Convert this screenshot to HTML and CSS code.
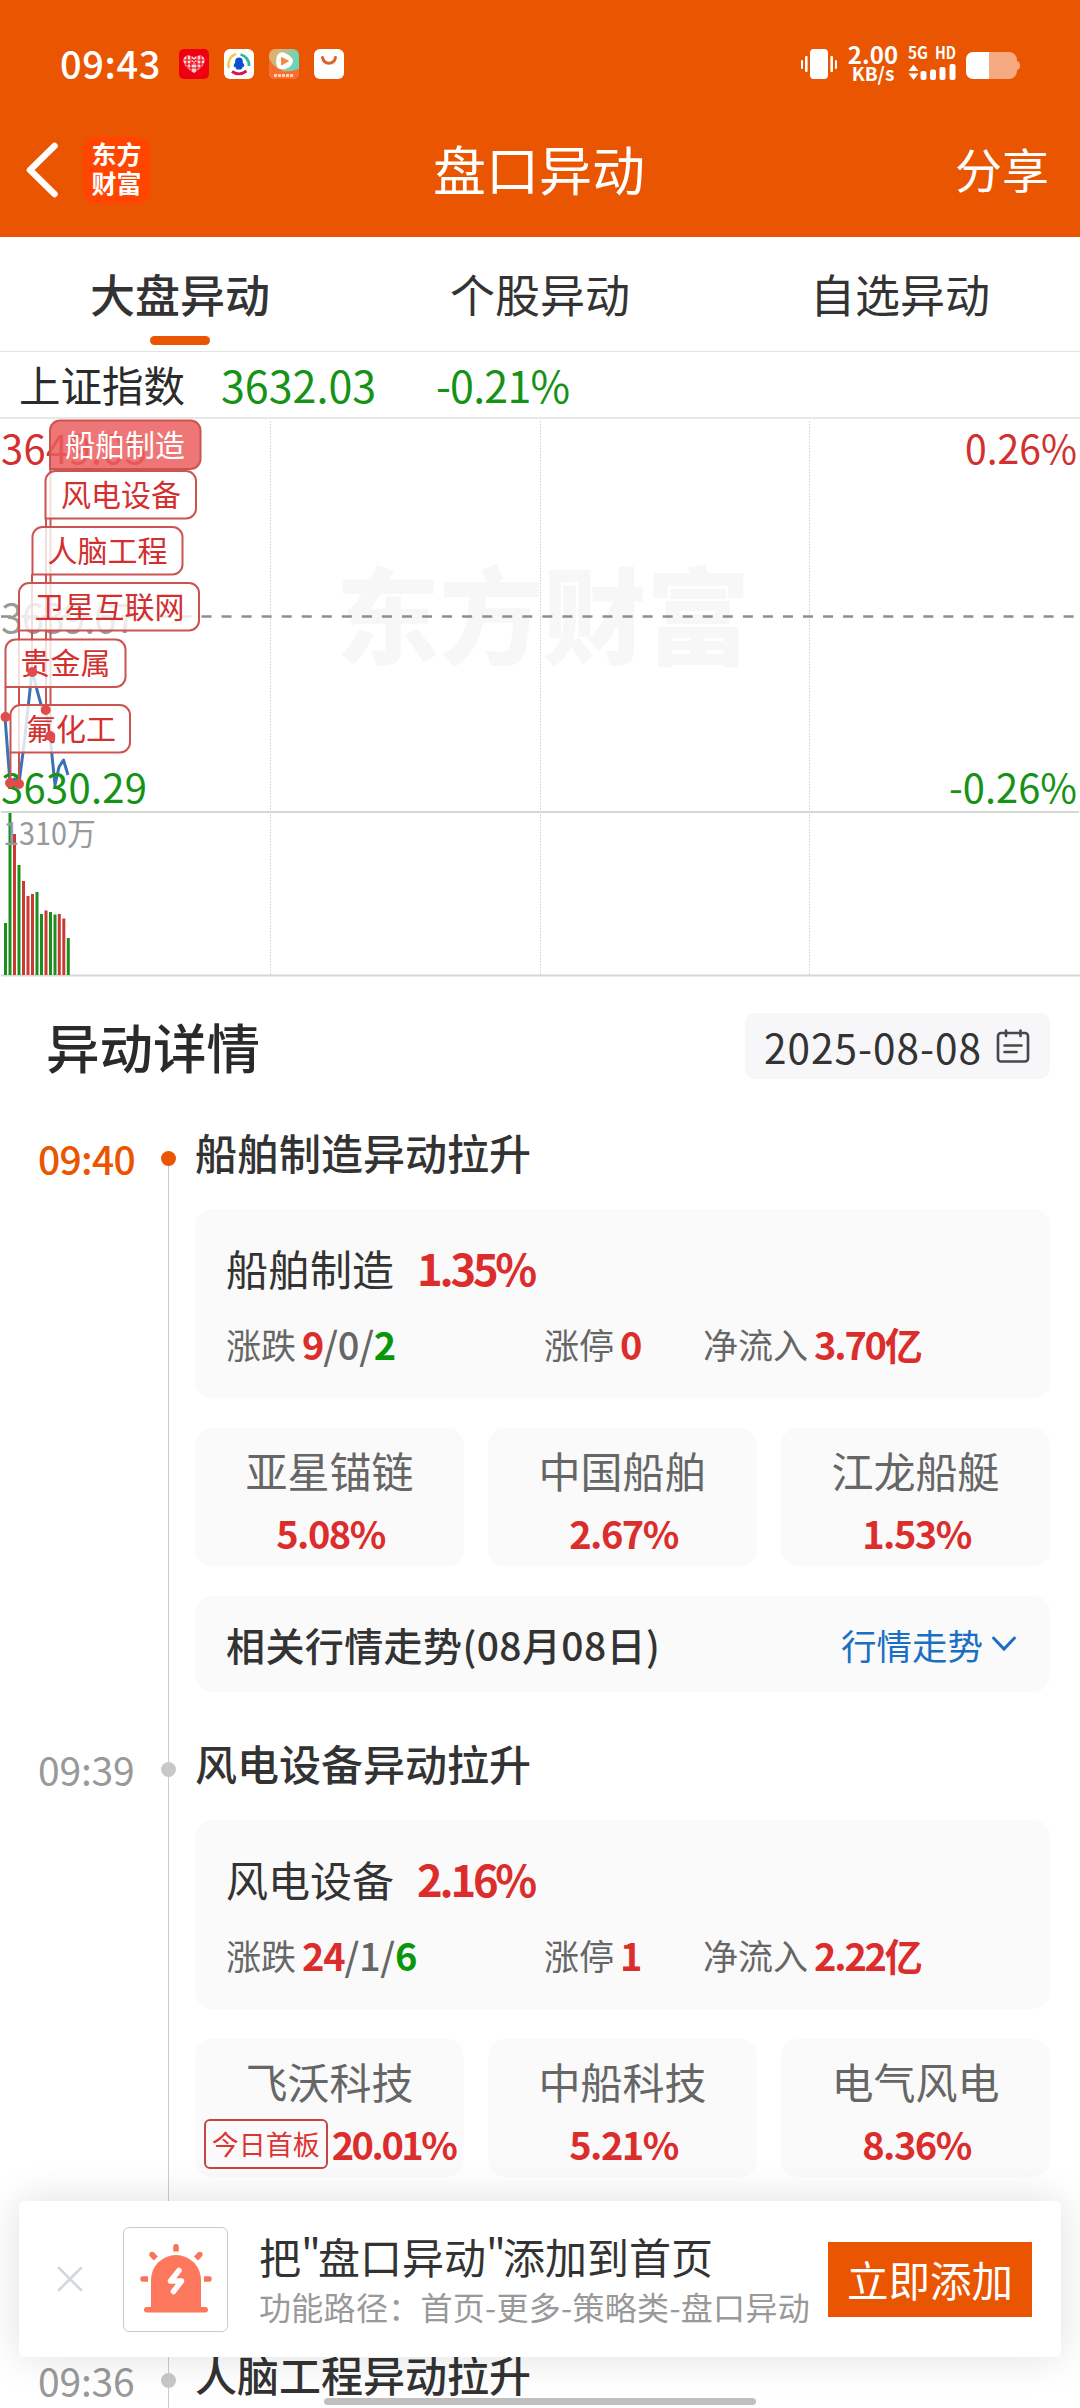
FILE: index.html
```html
<!DOCTYPE html>
<html lang="zh-CN">
<head>
<meta charset="utf-8">
<title>盘口异动</title>
<link rel="stylesheet" href="styles.css">
</head>
<body>
<div class="screen">
  <header class="header">
    <div class="status">
      <span class="clock">09:43</span>
      <svg class="apps" width="165" height="30" viewBox="0 0 165 30">
        <defs>
          <linearGradient id="g1" x1="0" y1="0" x2="1" y2="0.3"><stop offset="0" stop-color="#f0a860"/><stop offset=".55" stop-color="#b5c08e"/><stop offset="1" stop-color="#5fd8bf"/></linearGradient>
        </defs>
        <rect width="30" height="30" rx="5" fill="#ee0010"/>
        <path d="M15 24C9 20 4.500 16.500 4.500 11.500C4.500 6 11.500 5 15 9C18.500 5 25.500 6 25.500 11.500C25.500 16.500 21 20 15 24Z" fill="#fbd7d7"/>
        <path d="M8 7v12M12 6v16M18 6v16M22 7v12M5 11h6M19 11h6M5 15h20M9 19h12M13 10l4 4M17 10l-4 4" stroke="#ee0010" stroke-width="1.200" fill="none"/>
        <rect x="45" width="30" height="30" rx="6" fill="#fff"/>
        <path d="M50 19A11 11 0 0 1 57 5" stroke="#e9cf4e" stroke-width="2.500" fill="none"/>
        <path d="M61.500 5.500A11 11 0 0 1 70 17" stroke="#2eb6a0" stroke-width="2.800" fill="none"/>
        <path d="M53 22.500Q60 27.500 67.500 22" stroke="#d3145c" stroke-width="2.800" fill="none"/>
        <path d="M60 8.500c-3.500 0-4 3-3.800 5c-1.600 2-2 4-1 4.500l1-.6c.3 1.500 1 2.600 1.800 3h4c.8-.4 1.500-1.500 1.800-3l1 .6c1-.5.6-2.500-1-4.500c.2-2-.3-5-3.800-5z" fill="#0b50d0"/>
        <rect x="90" width="30" height="30" rx="6" fill="url(#g1)"/>
        <path d="M90 20Q105 25 120 20V24a6 6 0 0 1-6 6H96a6 6 0 0 1-6-6Z" fill="#ff6a30"/>
        <path d="M90 9Q94 19 105 22Q97 23 90 20Z" fill="#f36f2d"/>
        <path d="M98.500 6Q101 2 106 4Q113 7 114 12Q113 18 106 20Q99 21 98 17Q96 11 98.500 6Z" fill="#fff"/>
        <path d="M102.500 8.500L109.500 12L102.500 16Z" fill="#ef8c3c" stroke="#ef8c3c" stroke-linejoin="round"/>
        <path d="M95 26.500h20" stroke="#ffd9a8" stroke-width="3" stroke-dasharray="3 1"/>
        <rect x="135" width="30" height="30" rx="6" fill="#fff"/>
        <path d="M143.500 8.500c1.500 7.500 11.500 7.500 13 0" stroke="#d9622a" stroke-width="3" stroke-linecap="round" fill="none"/>
      </svg>
      <span class="grow"></span>
      <svg width="38" height="30" viewBox="0 0 38 30" fill="#fff">
        <rect x="10" width="18" height="30" rx="4"/>
        <rect x="1" y="11" width="2" height="9" rx="1"/><rect x="5" y="7" width="2.600" height="16" rx="1"/>
        <rect x="30.400" y="7" width="2.600" height="16" rx="1"/><rect x="35" y="11" width="2" height="9" rx="1"/>
      </svg>
      <span class="speed"><b class="rate">2.00</b><b class="unit">KB/s</b></span>
      <svg class="signal" width="48" height="36" viewBox="0 0 48 36" fill="#fff">
        <text x="0" y="13" class="net" textLength="20" lengthAdjust="spacingAndGlyphs">5G</text>
        <text x="27" y="13" class="net" textLength="21" lengthAdjust="spacingAndGlyphs">HD</text>
        <path d="M5.500 18.500L10.500 25H.5ZM5.500 34L.5 27.500H10.500Z"/>
        <rect x="12.500" y="25" width="6" height="9" rx="2"/><rect x="22" y="23.500" width="6" height="10.500" rx="2"/>
        <rect x="31.500" y="21" width="6" height="13" rx="2"/><rect x="41.500" y="18" width="6" height="16" rx="2"/>
      </svg>
      <svg class="battery" width="54" height="27" viewBox="0 0 54 27" fill="#fff">
        <path opacity=".5" d="M23 0h20a8 8 0 0 1 8 8v1q3 .5 3 4.500t-3 4.500v1a8 8 0 0 1-8 8H23Z"/>
        <path d="M23 0H7a7 7 0 0 0-7 7v13a7 7 0 0 0 7 7h16Z"/>
      </svg>
    </div>
    <nav class="navbar">
      <div class="nav-left">
        <svg width="32" height="56" viewBox="0 0 32 56"><path d="M28.500 4L4 28L28.500 52" fill="none" stroke="#fff" stroke-width="6.500" stroke-linecap="round" stroke-linejoin="round"/></svg>
        <span class="logo">东方<br>财富</span>
      </div>
      <h1 class="title">盘口异动</h1>
      <span class="share">分享</span>
    </nav>
  </header>

  <div class="tabs">
    <div class="tab active">大盘异动</div>
    <div class="tab">个股异动</div>
    <div class="tab">自选异动</div>
  </div>

  <div class="index-row"><span class="index-name">上证指数</span><span class="index-val">3632.03</span><span class="index-chg">-0.21%</span></div>

  <svg class="chart" width="1080" height="559" viewBox="0 419 1080 559">
    <text class="mark" x="336" y="656" textLength="414" lengthAdjust="spacingAndGlyphs">东方财富</text>
    <g stroke="#cfcfcf" stroke-width="1" stroke-dasharray="1.500 1.500"><path d="M270.500 421V975M540.500 421V975M809.500 421V975"/></g>
    <path d="M1 812H1079M1 975.500H1080" stroke="#d6d6d6" stroke-width="2"/>
    <path d="M1 616.500H1074" stroke="#8e8e8e" stroke-width="2.600" stroke-dasharray="10 10.050"/>
    <g class="axis">
      <text x="1" y="463.500" fill="#d33030" textLength="146">3649.05</text>
      <text x="1" y="632.500" fill="#999" textLength="136">3639.67</text>
      <text x="965" y="463.500" fill="#d33030" textLength="112" lengthAdjust="spacingAndGlyphs">0.26%</text>
      <text x="949" y="802.500" fill="#169316" textLength="128" lengthAdjust="spacingAndGlyphs">-0.26%</text>
    </g>
    <polyline points="5,717 10,783 14,779 19,783 24,745 30,690 32,670 37,690 42,708 46,712 50,736 55,785 59,767 63.500,760 68,775" fill="none" stroke="#3c72b4" stroke-width="3" stroke-linejoin="round"/>
    <text class="axis" x="1" y="802.500" fill="#169316" textLength="146">3630.29</text>
    <g stroke="#1b8f1b" stroke-width="3">
      <path d="M5.500 923V975M10 813V975M19 865V975M37 892V975M41.500 914V975M50.500 912V975M55 914.500V975M68.300 938V975"/>
      <path stroke="#c93a34" d="M14.500 834V975M23.500 881V975M28 896V975M32.500 894V975M46 910.500V975M59.300 914V975M63.800 918.500V975"/>
    </g>
    <text class="vol" x="3" y="845" fill="#999" textLength="93" lengthAdjust="spacingAndGlyphs">1310万</text>
    <path d="M5.500 687V717M10.500 752V782M19 630V784M32 574V672M46 518V710M50.500 469V736" stroke="#cc5450" stroke-width="2"/>
    <g fill="#fff" fill-opacity=".8" stroke="#cc5450" stroke-width="2">
      <path d="M10.500 752.500V715a10 10 0 0 1 10-10H120a10 10 0 0 1 10 10V742.500a10 10 0 0 1-10 10Z"/>
      <path d="M5.500 687V649.500a10 10 0 0 1 10-10H115.500a10 10 0 0 1 10 10V677a10 10 0 0 1-10 10Z"/>
      <path d="M19 630.500V593a10 10 0 0 1 10-10H189a10 10 0 0 1 10 10V620.500a10 10 0 0 1-10 10Z"/>
      <path d="M32.500 574.500V537a10 10 0 0 1 10-10H172.500a10 10 0 0 1 10 10V564.500a10 10 0 0 1-10 10Z"/>
      <path d="M45.500 518.500V481a10 10 0 0 1 10-10H186a10 10 0 0 1 10 10V508.500a10 10 0 0 1-10 10Z"/>
      <path fill="#eb5e5e" fill-opacity=".85" d="M50 469V430.500a10 10 0 0 1 10-10H190.500a10 10 0 0 1 10 10V459a10 10 0 0 1-10 10Z"/>
    </g>
    <g class="tag">
      <text x="65" y="455.500" fill="#fff">船舶制造</text>
      <text x="61" y="505.500">风电设备</text>
      <text x="47.500" y="561.500">人脑工程</text>
      <text x="34.500" y="617.500">卫星互联网</text>
      <text x="20.500" y="674">贵金属</text>
      <text x="26" y="739.500">氟化工</text>
    </g>
    <g fill="#e14b4b"><circle cx="5.500" cy="717" r="5"/><circle cx="10" cy="783" r="5"/><circle cx="19" cy="784" r="5"/><circle cx="32.300" cy="672" r="5"/><circle cx="45.700" cy="710" r="5"/><circle cx="50.300" cy="736" r="5"/></g>
  </svg>

  <section class="detail">
    <div class="detail-head">
      <h2>异动详情</h2>
      <div class="date"><span>2025-08-08</span>
        <svg width="34" height="34" viewBox="0 0 34 34" fill="none" stroke="#484848" stroke-width="2.600" stroke-linecap="round"><rect x="2" y="4" width="30" height="28.500" rx="3"/><path d="M10 1.500V7M24.500 1.500V7M8.500 16.500H25.500M8.500 23H20.500"/></svg>
      </div>
    </div>

    <article class="entry first">
      <time>09:40</time>
      <div class="rail"><i></i></div>
      <div class="body">
        <h3>船舶制造异动拉升</h3>
        <div class="card board">
          <div class="board-top"><span>船舶制造</span><b>1.35%</b></div>
          <div class="stats"><span class="s1">涨跌<b><em>9</em>/0/<em class="down">2</em></b></span><span class="s2">涨停<b><em>0</em></b></span><span class="s3">净流入<b><em>3.70亿</em></b></span></div>
        </div>
        <div class="stocks">
          <div class="card stock"><span>亚星锚链</span><b>5.08%</b></div>
          <div class="card stock"><span>中国船舶</span><b>2.67%</b></div>
          <div class="card stock"><span>江龙船艇</span><b>1.53%</b></div>
        </div>
        <div class="card trend"><b>相关行情走势(08月08日)</b><span class="link">行情走势</span>
          <svg width="26" height="18" viewBox="0 0 26 18"><path d="M2.500 3L13 14L23.500 3" fill="none" stroke="#1a6fc4" stroke-width="3" stroke-linecap="round"/></svg>
        </div>
      </div>
    </article>

    <article class="entry">
      <time>09:39</time>
      <div class="rail"><i></i></div>
      <div class="body">
        <h3>风电设备异动拉升</h3>
        <div class="card board">
          <div class="board-top"><span>风电设备</span><b>2.16%</b></div>
          <div class="stats"><span class="s1">涨跌<b><em>24</em>/1/<em class="down">6</em></b></span><span class="s2">涨停<b><em>1</em></b></span><span class="s3">净流入<b><em>2.22亿</em></b></span></div>
        </div>
        <div class="stocks">
          <div class="card stock"><span>飞沃科技</span><div class="pct"><i class="badge">今日首板</i><b>20.01%</b></div></div>
          <div class="card stock"><span>中船科技</span><b>5.21%</b></div>
          <div class="card stock"><span>电气风电</span><b>8.36%</b></div>
        </div>
      </div>
    </article>

    <article class="entry">
      <time>09:36</time>
      <div class="rail"><i></i></div>
      <div class="body"><h3>人脑工程异动拉升</h3></div>
    </article>
  </section>

  <aside class="toast">
    <svg class="close" width="28" height="28" viewBox="0 0 28 28"><path d="M3 3L25 25M25 3L3 25" stroke="#d3d7dc" stroke-width="2.600" stroke-linecap="round"/></svg>
    <div class="alarm">
      <svg width="74" height="72" viewBox="0 0 74 72">
        <g fill="#fc775b"><path d="M12 66V37a25 25 0 0 1 50 0V66Z"/><rect x="5" y="64" width="64" height="5.500" rx="2.700"/></g>
        <g stroke="#f5755c" stroke-width="5.500" fill="none"><path d="M37 8.500V4.500M9 36H4.500M65 36H69.500M16.800 15.500L13.500 12M57 15.500L60.300 12"/></g>
        <g fill="#f5755c"><circle cx="37" cy="3.700" r="2.750"/><circle cx="4" cy="36" r="2.750"/><circle cx="70" cy="36" r="2.750"/><circle cx="13" cy="11.500" r="2.750"/><circle cx="60.800" cy="11.500" r="2.750"/></g>
        <path d="M40 27.500L31.500 38H42.500L34.500 48.500" fill="none" stroke="#fff" stroke-width="5.500" stroke-linecap="round" stroke-linejoin="round"/>
      </svg>
    </div>
    <div class="toast-text"><strong>把<q>"</q>盘口异动<q>"</q>添加到首页</strong><small>功能路径：首页-更多-策略类-盘口异动</small></div>
    <button class="add">立即添加</button>
  </aside>
  <div class="home-bar"></div>
</div>
</body>
</html>
```
FILE: styles.css
```css
* { box-sizing: border-box; margin: 0; padding: 0; }
body { background: #fff; font-family: "Noto Sans CJK SC", "Noto Sans", sans-serif; color: #333; }
em, i { font-style: normal; }
b, h2, h3 { font-weight: 500; }
q { quotes: none; letter-spacing: -3px; }
.screen { position: relative; width: 1080px; height: 2408px; overflow: hidden; }

.header { height: 237px; background: #ea5502; color: #fff; }
.status { height: 128px; padding: 0 60px 0 60px; display: flex; align-items: center; }
.clock { width: 119px; padding-bottom: 3px; font-size: 38px; font-weight: 500; line-height: 40px; letter-spacing: 0.6px; }
.grow { flex: 1; }
.speed { width: 70px; display: flex; flex-direction: column; align-items: center; padding-bottom: 3px; }
.speed b { font-weight: 700; }
.rate { font-size: 24px; line-height: 20px; }
.unit { font-size: 19px; line-height: 18px; }
.net { font-size: 17px; font-weight: 700; }
.signal { margin-right: 10px; }
.battery { margin-top: 3px; }
.navbar { height: 84px; display: grid; grid-template-columns: 1fr auto 1fr; align-items: center; padding: 0 31px 0 26px; }
.nav-left { display: flex; align-items: center; gap: 25px; }
.logo { width: 67px; height: 67px; border-radius: 13px; background: #ff4500; font-size: 25px; font-weight: 700; line-height: 29px; text-align: center; padding-top: 2px; }
.title { padding: 0 0 5px 3px; font-size: 53px; font-weight: 400; line-height: 60px; }
.share { justify-self: end; padding-bottom: 5px; font-size: 47px; line-height: 56px; }

.tabs { height: 115px; display: grid; grid-template-columns: repeat(3, 1fr); border-bottom: 1px solid #e2e2e2; }
.tab { display: flex; flex-direction: column; align-items: center; padding-top: 27px; font-size: 45px; line-height: 60px; }
.active { font-weight: 500; }
.active::after { content: ""; width: 60px; height: 9px; margin-top: 12px; border-radius: 5px; background: #ea5502; }

.index-row { height: 67px; padding-left: 19px; display: flex; border-bottom: 2px solid #e8e8e8; font-size: 41.500px; line-height: 64px; color: #2b2b2b; }
.index-name { width: 202px; }
.index-val { width: 215px; color: #169316; font-size: 43px; }
.index-chg { color: #169316; font-size: 43px; letter-spacing: -0.8px; }

.chart { display: block; }
.mark { font-size: 105px; font-weight: 900; fill: #f7f7f7; }
.axis { font-size: 40px; }
.vol { font-size: 31px; }
.tag { font-size: 30px; fill: #d32f2f; }

.detail-head { height: 132px; display: flex; justify-content: space-between; align-items: flex-start; padding: 35px 30px 0 46px; }
.detail-head h2 { padding-top: 1px; font-size: 53.500px; line-height: 64px; color: #2a2a2a; }
.date { width: 305px; height: 66px; border-radius: 10px; background: #f7f7fa; display: flex; align-items: center; justify-content: space-between; padding: 0 20px 0 19px; font-size: 40.500px; line-height: 60px; letter-spacing: 1px; }
.date span { padding-top: 1px; }

.entry { height: 611px; display: grid; grid-template-columns: 153px 31px 1fr; padding: 0 30px 0 0; }
.entry time { padding: 18px 0 0 38px; font-size: 39px; line-height: 60px; letter-spacing: -0.2px; color: #999; }
.rail { position: relative; display: flex; justify-content: center; padding-top: 41px; background: linear-gradient(#ccc, #ccc) 15px 0 / 1px 100% no-repeat; }
.rail i { width: 15px; height: 15px; border-radius: 50%; background: #c8c8c8; }
.entry.first time { color: #ea5502; font-weight: 500; letter-spacing: -0.700px; }
.first .rail { background-position: 15px 48px; }
.first .rail i { background: #ea5502; }
.body { padding: 12px 0 0 11px; }
.body h3 { height: 87px; font-size: 42px; line-height: 60px; }
.card { border-radius: 17px; background: #fafafa; }
.board { height: 189px; padding: 29px 0 0 31px; }
.board-top { height: 77px; display: flex; gap: 23px; font-size: 42px; line-height: 60px; }
.board-top b { font-size: 43.500px; font-weight: 700; letter-spacing: -3.200px; color: #dc2d2d; }
.stats { display: grid; grid-template-columns: 318px 159px 1fr; font-size: 35px; line-height: 58px; color: #666; }
.stats span { display: flex; gap: 6px; }
.stats b { font-size: 38px; font-weight: 500; letter-spacing: -0.3px; }
.stats em { color: #dc2d2d; font-weight: 700; letter-spacing: -1.200px; }
.stats .s3 em { letter-spacing: -2.200px; }
.stats em.down { color: #0a960a; }
.stocks { margin-top: 30px; display: grid; grid-template-columns: repeat(3, 1fr); gap: 24px; }
.stock { height: 138px; padding-top: 12px; display: flex; flex-direction: column; align-items: center; color: #666; font-size: 42px; line-height: 60px; }
.stock b { padding-left: 2px; font-size: 38px; font-weight: 700; letter-spacing: -1.500px; color: #dc2d2d; line-height: 66px; }
.pct { display: flex; align-items: center; gap: 2px; }
.stock .pct b { letter-spacing: -2.500px; }
.badge { border: 2px solid #c94545; border-radius: 6px; width: 124px; height: 50px; color: #d33; font-size: 27px; line-height: 46px; text-align: center; }
.trend { height: 96px; margin-top: 30px; padding: 0 33px 0 31px; display: flex; align-items: center; font-size: 39px; letter-spacing: 0.4px; }
.link { margin-left: auto; margin-right: 8px; font-size: 35.500px; letter-spacing: 0; color: #1a6fc4; }

.toast { position: absolute; left: 19px; top: 2201px; width: 1042px; height: 156px; background: #fff; border-radius: 6px; box-shadow: 0 0 40px rgba(0, 0, 0, .13); display: flex; align-items: center; padding: 0 29px 0 37px; }
.alarm { width: 105px; height: 105px; margin-left: 39px; border: 1px solid #ccc; border-radius: 6px; display: flex; align-items: center; justify-content: center; }
.toast-text { margin-left: 31px; flex: 1; white-space: nowrap; display: flex; flex-direction: column; }
.toast-text strong { font-weight: 400; font-size: 42px; line-height: 54px; }
.toast-text small { font-size: 32px; line-height: 46px; letter-spacing: 0.3px; color: #999; }
.add { width: 204px; height: 75px; border: 0; background: #ea5502; color: #fff; font: 400 41.500px/75px "Noto Sans CJK SC", sans-serif; }
.home-bar { position: absolute; left: 324px; top: 2398px; width: 432px; height: 7px; border-radius: 4px; background: #c0c0c0; }
```
